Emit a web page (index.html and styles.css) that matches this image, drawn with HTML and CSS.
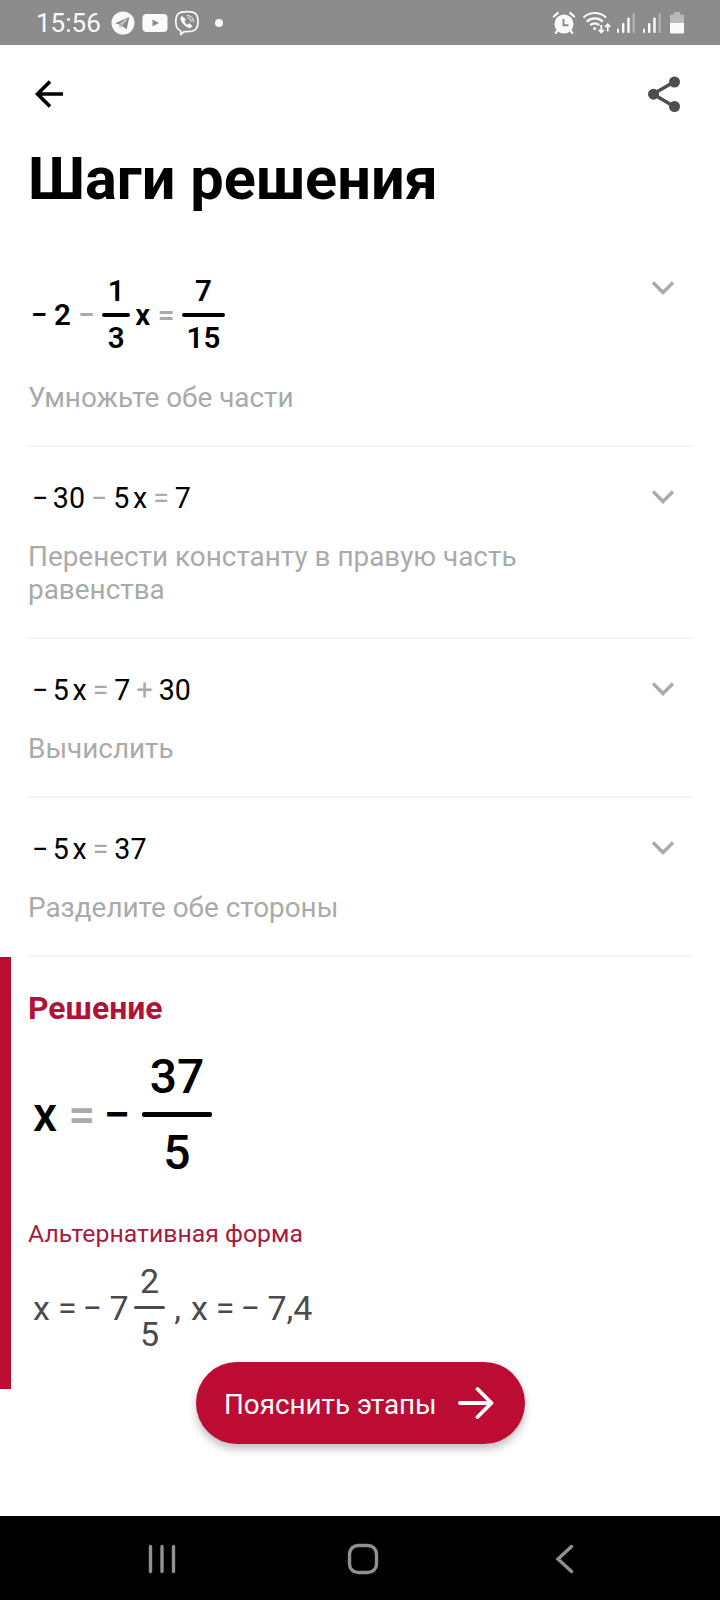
FILE: index.html
```html
<!DOCTYPE html>
<html lang="ru">
<head>
  <meta charset="UTF-8">
  <meta name="viewport" content="width=device-width, initial-scale=1.0">
  <title>Шаги решения</title>
  <link rel="stylesheet" href="styles.css">
</head>
<body>
  <div class="screen">
    <div class="status-bar">
      <span class="time">15:56</span>
      <div class="status-left">
        <svg class="telegram" width="24" height="24" viewBox="0 0 24 24"><circle cx="12" cy="12" r="11.5" fill="#fafafa"/><path d="M4 12.2 18.4 6 15.6 18.4 11 15 8.8 17 8.4 13.6Z" fill="#8c8c8c"/><path d="M8.6 13.6 15.5 8.6 10.4 14.4 9 16.6" fill="none" stroke="#fafafa" stroke-width=".8"/></svg>
        <svg class="youtube" width="26" height="20" viewBox="0 0 26 20"><rect x=".5" y="1" width="25" height="18" rx="4" fill="#fafafa"/><path d="M10.5 6.4v7.2L17 10Z" fill="#8c8c8c"/></svg>
        <svg class="viber" width="26" height="26" viewBox="0 0 26 26" fill="none" stroke="#fafafa" stroke-linecap="round" stroke-linejoin="round"><path d="M13 1.6C5 1.6 1.8 3.6 1.8 11.6c0 5.4 1.3 8.2 5 9.4v3.6l3.4-3.1c10 .8 13.8-1.2 13.8-9.9C24 3.6 21 1.6 13 1.6Z" stroke-width="1.7"/><path d="M8 6.5c-1.8 1-1.4 2.6-.6 4.2 1.5 3.1 4 5.5 7.2 6.8 1.5.6 2.7 0 3.4-1.6l-2.7-2.2-1.8 1.2c-1.5-.6-2.7-1.9-3.3-3.4l1.2-1.6Z" fill="#fafafa" stroke-width=".8"/><path d="M13.5 5.5c3.5.2 5.8 2.3 5.9 6M13.7 7.8c2.2.2 3.3 1.4 3.5 3.5" stroke-width="1"/></svg>
        <span class="dot"></span>
      </div>
      <div class="status-right">
        <svg class="alarm" width="24" height="24" viewBox="0 0 24 24" fill="none" stroke="#fafafa" stroke-linecap="round"><circle cx="12" cy="13" r="9.5" fill="#fafafa" stroke="none"/><path d="M1.8 5.5 5.8 2M22.2 5.5 18.2 2M5.5 19.5 3.8 21.8M18.5 19.5l1.7 2.3" stroke-width="2.2"/><path d="M11.5 8v6.3h5" stroke="#8c8c8c" stroke-width="1.9" stroke-linecap="butt"/></svg>
        <svg class="wifi" width="29" height="24" viewBox="0 0 29 24" fill="none" stroke="#fafafa" stroke-width="2.2"><path d="M1.5 6.5C8 .5 17.5.5 24 6.5M4.8 10.6c4.8-4.2 11.2-4.2 16 0M8.2 14.2c2.8-2.3 6.3-2.3 9.1 0"/><circle cx="12.6" cy="17.5" r="1.5" fill="#fafafa" stroke="none"/><path d="M19.3 14v7M16.8 18.8l2.5 2.6 2.5-2.6M25.7 20.5v-7M23.2 15.8l2.5-2.6 2.5 2.6" stroke-width="1.8"/></svg>
        <svg class="signal" width="20" height="22" viewBox="0 0 20 22" fill="#fafafa"><rect x="1" y="16.5" width="2" height="4.5" rx="1"/><rect x="6" y="11" width="2.4" height="10" rx="1"/><rect x="11.3" y="5.5" width="2.4" height="15.5" rx="1"/><rect x="16.6" y="1" width="2.2" height="20" rx="1" fill="#b4b4b4"/></svg>
        <svg class="signal" width="20" height="22" viewBox="0 0 20 22" fill="#fafafa"><rect x="1" y="16.5" width="2" height="4.5" rx="1"/><rect x="6" y="11" width="2.4" height="10" rx="1"/><rect x="11.3" y="5.5" width="2.4" height="15.5" rx="1"/><rect x="16.6" y="1" width="2.2" height="20" rx="1" fill="#b4b4b4"/></svg>
        <svg class="battery" width="14" height="22" viewBox="0 0 14 22"><path d="M4 0h6v2.5h3a1 1 0 0 1 1 1V11H0V3.5a1 1 0 0 1 1-1h3Z" fill="#b9b9b9"/><path d="M0 11h14v9.5a1 1 0 0 1-1 1H1a1 1 0 0 1-1-1Z" fill="#fafafa"/></svg>
      </div>
    </div>

    <header class="toolbar">
      <svg width="28" height="28" viewBox="0 0 28 28" fill="none" stroke="#000" stroke-width="3.6"><path d="M28 14H3M15 1.5 2.5 14 15 26.5"/></svg>
      <svg width="34" height="36" viewBox="0 0 34 36" fill="#4d4d50"><path d="M27 6 6 18 27 30.5" fill="none" stroke="#4d4d50" stroke-width="3.3"/><circle cx="6.5" cy="18.2" r="5.5"/><circle cx="27.5" cy="6" r="5.5"/><circle cx="27.5" cy="30.5" r="5.5"/></svg>
    </header>

    <h1>Шаги решения</h1>

    <section class="step">
      <div class="step-body">
        <div class="math bold">
          <span>−</span><span class="num">2</span><span class="op">−</span>
          <span class="frac"><span>1</span><span class="bar"></span><span>3</span></span>
          <span class="var">x</span><span class="op">=</span>
          <span class="frac wide"><span>7</span><span class="bar"></span><span>15</span></span>
        </div>
        <p>Умножьте обе части</p>
      </div>
      <svg class="chevron" width="24" height="16" viewBox="0 0 24 16"><path d="M2 2.5 12 12.5 22 2.5"/></svg>
    </section>

    <section class="step">
      <div class="step-body">
        <div class="math">
          <span>−</span><span class="num">30</span><span class="op">−</span><span>5</span><span class="var">x</span><span class="op">=</span><span>7</span>
        </div>
        <p>Перенести константу в правую часть равенства</p>
      </div>
      <svg class="chevron" width="24" height="16" viewBox="0 0 24 16"><path d="M2 2.5 12 12.5 22 2.5"/></svg>
    </section>

    <section class="step">
      <div class="step-body">
        <div class="math">
          <span>−</span><span class="num">5</span><span class="var">x</span><span class="op">=</span><span>7</span><span class="op">+</span><span>30</span>
        </div>
        <p>Вычислить</p>
      </div>
      <svg class="chevron" width="24" height="16" viewBox="0 0 24 16"><path d="M2 2.5 12 12.5 22 2.5"/></svg>
    </section>

    <section class="step">
      <div class="step-body">
        <div class="math">
          <span>−</span><span class="num">5</span><span class="var">x</span><span class="op">=</span><span>37</span>
        </div>
        <p>Разделите обе стороны</p>
      </div>
      <svg class="chevron" width="24" height="16" viewBox="0 0 24 16"><path d="M2 2.5 12 12.5 22 2.5"/></svg>
    </section>

    <section class="solution">
      <h2>Решение</h2>
      <div class="math result">
        <span>x</span><span class="op">=</span><span class="sign">−</span>
        <span class="frac"><span>37</span><span class="bar"></span><span>5</span></span>
      </div>
      <h3>Альтернативная форма</h3>
      <div class="math alt">
        <span>x</span><span class="eq">=</span><span class="sign">−</span><span>7</span>
        <span class="frac"><span>2</span><span class="bar"></span><span>5</span></span>
        <span class="comma">,</span><span>x</span><span class="eq">=</span><span class="sign">−</span><span>7,4</span>
      </div>
    </section>

    <button class="explain-btn">
      <span>Пояснить этапы</span>
      <svg width="36" height="34" viewBox="0 0 36 34"><path d="M2 17H33M19.5 3 33.5 17 19.5 31"/></svg>
    </button>

    <nav class="nav-bar">
      <svg width="32" height="32" viewBox="0 0 32 32"><path d="M4.5 3.5v25M16 3.5v25M27.5 3.5v25"/></svg>
      <svg class="home" width="32" height="32" viewBox="0 0 32 32"><rect x="2.5" y="2.5" width="27" height="27" rx="8.5"/></svg>
      <svg width="32" height="32" viewBox="0 0 32 32"><path d="M22.5 3.5 9 16 22.5 28.5"/></svg>
    </nav>
  </div>
</body>
</html>
```

FILE: styles.css
```css
* { box-sizing: border-box; margin: 0; padding: 0; }
body {
  font-family: Roboto, sans-serif;
  background: #fff;
  color: #000;
}
svg { display: block; flex: none; }
.screen {
  position: relative;
  display: flex;
  flex-direction: column;
  width: 720px;
  height: 1600px;
  overflow: hidden;
}
.status-bar {
  display: flex;
  align-items: center;
  height: 45px;
  padding: 0 36px 0 36px;
  background: #8c8c8c;
  color: #fafafa;
}
.time {
  width: 75px;
  font-size: 26px;
  line-height: 30px;
}
.status-left, .status-right {
  display: flex;
  align-items: center;
}
.status-left { gap: 6.5px; }
.dot {
  width: 8px;
  height: 8px;
  margin-left: 8px;
  border-radius: 50%;
  background: #fafafa;
}
.status-right { margin-left: auto; }
.wifi { margin: 0 5px 0 6px; }
.signal { margin-right: 6px; }
.battery { margin-left: 2px; }
.toolbar {
  display: flex;
  justify-content: space-between;
  align-items: center;
  height: 98px;
  padding: 0 39px 0 35px;
}
h1 {
  padding: 1px 0 0 28px;
  font-size: 59.5px;
  font-weight: 700;
  line-height: 70px;
}
.step {
  display: flex;
  justify-content: space-between;
  margin: 0 28px;
  padding: 33px 0 31px;
  border-bottom: 2px solid #f4f4f4;
}
h1 + .step { padding-top: 56px; }
h1 + .step .chevron { margin-top: 10px; }
.step-body { width: 510px; }
.step p {
  margin-top: 24px;
  font-size: 27.9px;
  line-height: 33px;
  color: #aaa;
}
.step .bold + p { margin-top: 21px; }
.chevron {
  margin: 9px 17px 0 0;
  fill: none;
  stroke: #aaa;
  stroke-width: 3.4;
}
.math {
  display: flex;
  align-items: center;
  padding-left: 4px;
  font-size: 28.6px;
  line-height: 36px;
}
.num { margin-left: 4.5px; }
.var { margin-left: 3.5px; }
.op {
  margin: 0 6px;
  color: #aaa;
}
.bold {
  padding-left: 3px;
  font-size: 29.5px;
  font-weight: 600;
}
.bold .num { margin-left: 6.5px; }
.bold .var { margin-left: 5px; }
.bold .op { margin: 0 7.5px; }
.frac {
  display: flex;
  flex-direction: column;
  text-align: center;
  line-height: 43px;
}
.frac span { padding: 0 5.5px; }
.wide span { padding: 0 4.7px; }
.frac .bar {
  height: 4px;
  border-radius: 2px;
  background: currentColor;
}
.solution {
  height: 432px;
  padding: 32px 0 0 17px;
  border-left: 11px solid #bb0d34;
}
h2 {
  font-size: 31.9px;
  font-weight: 700;
  line-height: 38px;
  color: #b01238;
}
.result {
  margin-top: 14px;
  padding-left: 5px;
  font-size: 48px;
  font-weight: 500;
}
.result .op { margin: 0 8px 0 11px; }
.result .sign { margin-right: 11.5px; }
.result .frac { line-height: 71px; }
.result .frac span { padding: 0 8px; }
.result .frac .bar { height: 5px; }
h3 {
  margin-top: 32px;
  font-size: 24.8px;
  font-weight: 400;
  line-height: 28px;
  color: #a81a3e;
}
.alt {
  margin-top: 8px;
  padding-left: 5px;
  font-size: 34px;
  color: #4a4a4a;
}
.alt .eq { margin: 0 6px 0 8px; }
.alt .sign { margin-right: 7.5px; }
.alt .frac {
  margin-left: 5.5px;
  line-height: 50px;
}
.alt .frac span { padding: 0 6px; }
.alt .frac .bar { height: 3px; }
.comma { margin: 0 10px 0 9px; }
.explain-btn {
  position: absolute;
  left: 196px;
  bottom: 156px;
  display: flex;
  align-items: center;
  justify-content: space-between;
  width: 329px;
  height: 82px;
  padding: 0 31px 0 28px;
  border: none;
  border-radius: 41px;
  background: #bd0c33;
  box-shadow: 0 5px 8px rgba(0, 0, 0, 0.25);
  color: #fff;
  font-family: inherit;
  font-size: 27.8px;
}
.explain-btn span { padding-top: 2px; }
.explain-btn path {
  fill: none;
  stroke: #fff;
  stroke-width: 3.8;
  stroke-linecap: round;
  stroke-linejoin: round;
}
.nav-bar {
  display: flex;
  justify-content: space-between;
  height: 84px;
  margin-top: auto;
  padding: 27px 139px 0 146px;
  background: #000;
}
.nav-bar svg {
  fill: none;
  stroke: #909090;
  stroke-width: 3.4;
  stroke-linecap: round;
}
.nav-bar .home { margin-right: 2px; }
```
